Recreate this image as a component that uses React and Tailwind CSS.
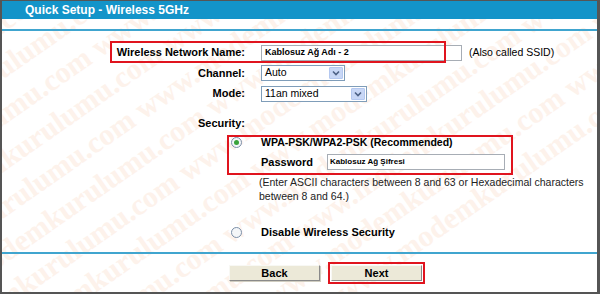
import React from "react";

const sans = { fontFamily: '"Liberation Sans", Arial, sans-serif' };

function SelectBox({ width, value }) {
  return (
    <div
      className={`flex h-[16px] items-stretch border border-[#7f9db9] bg-white ${width}`}
    >
      <div className="flex flex-1 items-center pl-[3px] text-[10.5px] text-black">
        {value}
      </div>
      <div className="m-[1px] flex w-[14px] items-center justify-center rounded-[1px] border border-[#b4c8f0] bg-[#c8d7f6]">
        <svg width="8" height="6" viewBox="0 0 8 6">
          <path d="M1 1.5 L4 4.5 L7 1.5" stroke="#4d6185" strokeWidth="1.6" fill="none" />
        </svg>
      </div>
    </div>
  );
}

function Radio({ checked }) {
  return (
    <div className="flex h-[11px] w-[11px] items-center justify-center rounded-full border border-[#7b8fa8] bg-[#f4f6f8]">
      {checked && <div className="h-[5px] w-[5px] rounded-full bg-[#3aa33a]" />}
    </div>
  );
}

function Watermark() {
  const lines = Array.from({ length: 16 });
  return (
    <div className="pointer-events-none absolute inset-0 overflow-hidden">
      <div
        className="absolute left-[-300px] top-[-400px] flex w-[1400px] flex-col gap-[2px] text-[30px] font-bold leading-[36px] text-[#fdf2eb]"
        style={{ fontFamily: '"Liberation Serif", serif', transform: "rotate(-35deg)" }}
      >
        {lines.map((_, i) => (
          <div key={i} className="whitespace-nowrap" style={{ marginLeft: (i % 2) * 60 }}>
            www.modemkurulumu.com www.modemkurulumu.com www.modemkurulumu.com
          </div>
        ))}
      </div>
    </div>
  );
}

export default function App() {
  return (
    <div
      className="relative h-[294px] w-[600px] overflow-hidden border-b-2 border-l-2 border-r-[3px] border-t border-[#555] bg-white"
      style={sans}
    >
      <Watermark />
      <div className="relative flex h-full flex-col">
        <div className="flex h-[18px] items-center bg-[#1394c9] pl-[23px] text-[12px] font-bold text-white">
          Quick Setup - Wireless 5GHz
        </div>
        <div className="h-[10px]" />
        <div className="h-[2px] bg-[#40a5cf]" />

        <div className="grid grid-cols-[253px_1fr] pt-[11px] text-[11px] text-black">
          {/* Network name */}
          <div className="flex h-[21px] items-center justify-end pr-[10px] font-bold">
            Wireless Network Name:
          </div>
          <div className="flex h-[21px] items-center pl-[6px]">
            <div className="flex h-[16px] w-[201px] items-center border border-[#a7adb5] bg-white pl-[3px] text-[9px] font-bold">
              Kablosuz Ağ Adı - 2
            </div>
            <span className="ml-[7px] text-[10.5px]">(Also called SSID)</span>
          </div>

          {/* Channel */}
          <div className="flex h-[20px] items-center justify-end pr-[10px] font-bold">Channel:</div>
          <div className="flex h-[20px] items-center pl-[6px]">
            <SelectBox width="w-[84px]" value="Auto" />
          </div>

          {/* Mode */}
          <div className="flex h-[21px] items-center justify-end pr-[10px] font-bold">Mode:</div>
          <div className="flex h-[21px] items-center pl-[6px]">
            <SelectBox width="w-[106px]" value="11an mixed" />
          </div>

          <div className="col-span-2 h-[9px]" />

          {/* Security */}
          <div className="flex h-[20px] items-center justify-end pr-[10px] font-bold">Security:</div>
          <div className="h-[20px]" />

          {/* WPA */}
          <div className="flex h-[19px] items-center justify-end pr-[13px]">
            <Radio checked />
          </div>
          <div className="flex h-[19px] items-center pl-[6px] text-[10.5px] font-bold">
            WPA-PSK/WPA2-PSK (Recommended)
          </div>

          {/* Password */}
          <div className="h-[20px]" />
          <div className="flex h-[20px] items-center pl-[6px]">
            <span className="w-[66px] font-bold">Password</span>
            <div className="flex h-[16px] w-[178px] items-center border border-[#a7adb5] bg-white pl-[2px] text-[8px] font-bold">
              Kablosuz Ağ Şifresi
            </div>
          </div>

          {/* Note */}
          <div />
          <div className="whitespace-nowrap pl-[4px] pt-[3px] text-[10.5px] leading-[14px] text-[#222]">
            (Enter ASCII characters between 8 and 63 or Hexadecimal characters
            <br />
            between 8 and 64.)
          </div>

          <div className="col-span-2 h-[19px]" />

          {/* Disable */}
          <div className="flex h-[20px] items-center justify-end pr-[13px]">
            <Radio />
          </div>
          <div className="flex h-[20px] items-center pl-[6px] font-bold">Disable Wireless Security</div>
        </div>

        <div className="h-[10px]" />
        <div className="h-[2px] bg-[#40a5cf]" />

        <div className="flex items-center pl-[227px] pt-[8px]">
          <button className="flex h-[16px] w-[91px] items-center justify-center border border-b-[#8a8a8a] border-l-[#f8f8f4] border-r-[#8a8a8a] border-t-[#f8f8f4] bg-[#ece9d8] text-[11px] font-bold text-black shadow-[1px_1px_0_#d0cdc0]">
            Back
          </button>
          <div className="ml-[8px] border-2 border-[#e0141e] p-[1px]">
            <button className="flex h-[16px] w-[91px] items-center justify-center border border-b-[#8a8a8a] border-l-[#f8f8f4] border-r-[#8a8a8a] border-t-[#f8f8f4] bg-[#ece9d8] text-[11px] font-bold text-black">
              Next
            </button>
          </div>
        </div>
      </div>

      {/* red highlight boxes */}
      <div className="pointer-events-none absolute left-[108px] top-[40px] h-[22px] w-[336px] border-2 border-[#e0141e]" />
      <div className="pointer-events-none absolute left-[225px] top-[134px] h-[40px] w-[286px] border-2 border-[#e0141e]" />
    </div>
  );
}
